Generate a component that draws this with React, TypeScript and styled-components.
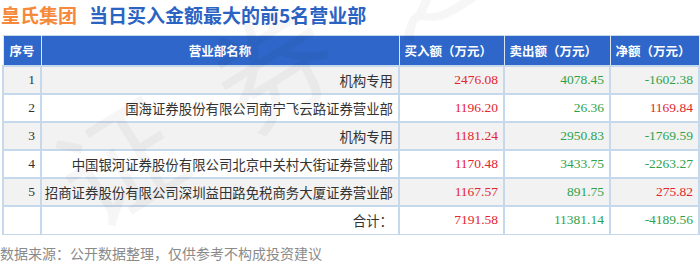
import React from 'react'
import styled, { createGlobalStyle } from 'styled-components'

type RowT = {
	no?: number
	name: string
	buy: string
	sell: string
	net: string
}

const rows: Array<RowT> = [
	{ no: 1, name: '机构专用', buy: '2476.08', sell: '4078.45', net: '-1602.38' },
	{ no: 2, name: '国海证券股份有限公司南宁飞云路证券营业部', buy: '1196.20', sell: '26.36', net: '1169.84' },
	{ no: 3, name: '机构专用', buy: '1181.24', sell: '2950.83', net: '-1769.59' },
	{ no: 4, name: '中国银河证券股份有限公司北京中关村大街证券营业部', buy: '1170.48', sell: '3433.75', net: '-2263.27' },
	{ no: 5, name: '招商证券股份有限公司深圳益田路免税商务大厦证券营业部', buy: '1167.57', sell: '891.75', net: '275.82' },
	{ name: '合计：', buy: '7191.58', sell: '11381.14', net: '-4189.56' }
]

const isNeg = (v: string) => v.startsWith('-')

const GlobalStyle = createGlobalStyle`
	body {
		margin: 0;
		background: #ffffff;
		font-family: 'Noto Sans CJK SC', 'Noto Sans', sans-serif;
	}
`

export default function App(): JSX.Element {
	return (
		<Page>
			<GlobalStyle />
			<Title>
				<Company>皇氏集团</Company>
				<Headline>当日买入金额最大的前5名营业部</Headline>
			</Title>
			<TableWrap>
				<Table>
					<colgroup>
						<col style={{ width: 38 }} />
						<col style={{ width: 358 }} />
						<col style={{ width: 105 }} />
						<col style={{ width: 106 }} />
						<col />
					</colgroup>
					<thead>
						<tr>
							<Th $align="center">序号</Th>
							<Th $align="center">营业部名称</Th>
							<Th>买入额（万元）</Th>
							<Th>卖出额（万元）</Th>
							<Th>净额（万元）</Th>
						</tr>
					</thead>
					<tbody>
						{rows.map((r, i) => (
							<Row key={i} $shaded={i % 2 === 0 && i < 5}>
								<NumCell>{r.no ?? ''}</NumCell>
								<NameCell>{r.name}</NameCell>
								<NumCell $color="#e2252e">{r.buy}</NumCell>
								<NumCell $color="#2ea24a">{r.sell}</NumCell>
								<NumCell $color={isNeg(r.net) ? '#2ea24a' : '#e2252e'}>{r.net}</NumCell>
							</Row>
						))}
					</tbody>
				</Table>
			</TableWrap>
			<Footer>数据来源：公开数据整理，仅供参考不构成投资建议</Footer>
			<Watermark>证券之星</Watermark>
		</Page>
	)
}

const Page = styled.div`
	position: relative;
	width: 700px;
	height: 263px;
	overflow: hidden;
`

const Title = styled.div`
	display: flex;
	align-items: center;
	gap: 12px;
	height: 30px;
	padding: 0 0 5px 1px;
	font-size: 19px;
	font-weight: bold;
	line-height: 26px;
`

const Company = styled.span`
	color: #f6893b;
`

const Headline = styled.span`
	color: #2b63c3;
`

const TableWrap = styled.div`
	padding-left: 2px;
`

const Table = styled.table`
	width: 698px;
	table-layout: fixed;
	border-collapse: collapse;
	border: 1px solid #c6d8ec;
`

const Th = styled.th<{ $align?: string }>`
	height: 29px;
	padding: 0 5px;
	background: #2e67c9;
	color: #ffffff;
	font-size: 12.5px;
	font-weight: bold;
	text-align: ${(p) => p.$align ?? 'left'};
	border: 1px solid #dbe6f3;
	border-top: 1px solid #c6d8ec;
	white-space: nowrap;
`

const Row = styled.tr<{ $shaded: boolean }>`
	height: 28px;
	background: ${(p) => (p.$shaded ? '#f2f2f2' : '#ffffff')};
`

const NameCell = styled.td`
	padding: 0 5px 0 0;
	text-align: right;
	font-size: 13.4px;
	color: #333333;
	border: 1px solid #c6d8ec;
	border-width: 2px 2px 0 2px;
	white-space: nowrap;
`

const NumCell = styled.td<{ $color?: string }>`
	padding: 0 5px 0 0;
	text-align: right;
	font-family: 'Liberation Serif', 'Noto Sans CJK SC', serif;
	font-size: 13.5px;
	color: ${(p) => p.$color ?? '#333333'};
	border: 1px solid #c6d8ec;
	border-width: 2px 2px 0 2px;
	white-space: nowrap;
`

const Footer = styled.div`
	padding-top: 8px;
	font-size: 14px;
	line-height: 20px;
	color: #8a8a8a;
`

const Watermark = styled.div`
	position: absolute;
	left: 20px;
	top: 115px;
	transform: rotate(-32deg);
	transform-origin: left top;
	font-size: 120px;
	letter-spacing: 60px;
	font-family: 'Noto Sans CJK SC', sans-serif;
	color: rgba(0, 0, 0, 0.035);
	pointer-events: none;
	white-space: nowrap;
`
